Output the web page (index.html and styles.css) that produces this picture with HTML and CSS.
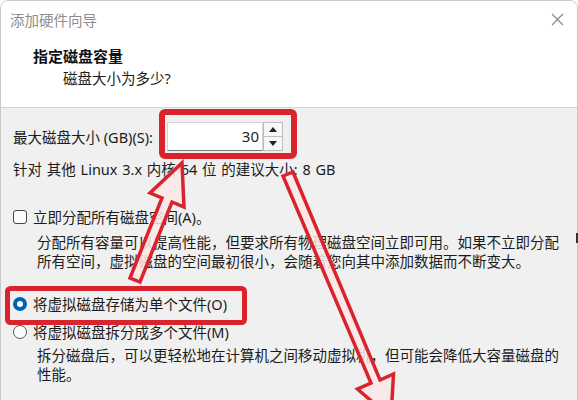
FILE: index.html
```html
<!DOCTYPE html>
<html lang="zh-CN">
<head>
<meta charset="utf-8">
<title>添加硬件向导</title>
<link rel="stylesheet" href="styles.css">
</head>
<body>
<div class="window">
  <div class="header">
    <div class="titlebar">
      <span class="title">添加硬件向导</span>
      <svg class="close" width="13" height="13" viewBox="0 0 13 13"><path d="M1 1L12 12M12 1L1 12" stroke="#8a8a8a" stroke-width="1.2" fill="none"/></svg>
    </div>
    <div class="heading">
      <div class="h1">指定磁盘容量</div>
      <div class="h2">磁盘大小为多少?</div>
    </div>
  </div>
  <div class="content">
    <div class="size-row">
      <span class="size-label">最大磁盘大小 (GB)(S):</span>
      <div class="spin">
        <div class="field">30</div>
        <div class="spin-btns">
          <div class="spin-btn"><svg width="8" height="5" viewBox="0 0 8 5"><path d="M0 5L4 0L8 5Z" fill="#222"/></svg></div>
          <div class="spin-btn"><svg width="8" height="5" viewBox="0 0 8 5"><path d="M0 0L8 0L4 5Z" fill="#222"/></svg></div>
        </div>
      </div>
    </div>
    <div class="hint">针对 其他 Linux 3.x 内核 64 位 的建议大小: 8 GB</div>
    <div class="option opt-check">
      <span class="checkbox"></span>
      <span>立即分配所有磁盘空间(A)。</span>
    </div>
    <div class="desc desc-a">
      <div>分配所有容量可以提高性能，但要求所有物理磁盘空间立即可用。如果不立即分配</div>
      <div>所有空间，虚拟磁盘的空间最初很小，会随着您向其中添加数据而不断变大。</div>
    </div>
    <div class="option opt-r1">
      <span class="radio radio-on"></span>
      <span>将虚拟磁盘存储为单个文件(O)</span>
    </div>
    <div class="option opt-r2">
      <span class="radio"></span>
      <span>将虚拟磁盘拆分成多个文件(M)</span>
    </div>
    <div class="desc desc-b">
      <div>拆分磁盘后，可以更轻松地在计算机之间移动虚拟机，但可能会降低大容量磁盘的</div>
      <div>性能。</div>
    </div>
  </div>
</div>
<span class="edge-mark"></span>
<svg class="annot" width="578" height="400" viewBox="0 0 578 400">
  <rect x="162" y="112" width="132" height="44" rx="3" fill="none" stroke="#d9232d" stroke-width="6"/>
  <rect x="7.5" y="288.5" width="237" height="34" rx="3" fill="none" stroke="#d9232d" stroke-width="5"/>
  <polygon points="182,163 184,207 172,202 140,282 130,278 162,198 150,193" fill="rgba(250,232,232,0.85)" stroke="#d9232d" stroke-width="3.5" stroke-linejoin="miter"/>
  <polygon points="283,176 293,172 380,380 393.5,374 391,418 357.5,389 371,383" fill="rgba(250,232,232,0.85)" stroke="#d9232d" stroke-width="3.5" stroke-linejoin="miter"/>
</svg>
</body>
</html>
```
FILE: styles.css
```css
html, body {
  margin: 0;
  padding: 0;
}
body {
  width: 578px;
  height: 400px;
  overflow: hidden;
  position: relative;
  background: #ffffff;
  font-family: "Noto Sans", "Noto Sans CJK SC", sans-serif;
  font-size: 14.5px;
  color: #1c1c1c;
}
.window {
  box-sizing: border-box;
  width: 578px;
  height: 420px;
  border: 1px solid #cacaca;
  border-radius: 8px 8px 0 0;
  background: #f0f0f0;
  overflow: hidden;
}
.header {
  background: #ffffff;
  height: 106px;
  border-bottom: 1px solid #d2d2d2;
}
.titlebar {
  height: 37px;
  display: flex;
  align-items: center;
  justify-content: space-between;
  padding: 0 13px 0 9px;
}
.title {
  color: #8e8e8e;
  font-size: 14.5px;
  line-height: 20px;
}
.close {
  display: block;
}
.heading {
  padding-left: 32px;
  padding-top: 8px;
}
.h1 {
  font-weight: bold;
  font-size: 15px;
  line-height: 20px;
  color: #111;
}
.h2 {
  margin-top: 2px;
  margin-left: 30px;
  line-height: 20px;
}
.content {
  padding: 14px 0 0 12px;
}
.size-row {
  display: flex;
  align-items: center;
  height: 29px;
}
.size-label {
  width: 154px;
  line-height: 20px;
  white-space: nowrap;
}
.spin {
  display: flex;
  height: 29px;
}
.field {
  box-sizing: border-box;
  width: 96px;
  height: 29px;
  background: #fff;
  border: 1px solid #d4d4d4;
  border-bottom: 1px solid #7a7a7a;
  text-align: right;
  padding-right: 3px;
  line-height: 26px;
  font-size: 15px;
}
.spin-btns {
  display: flex;
  flex-direction: column;
  width: 20px;
  height: 29px;
}
.spin-btn {
  box-sizing: border-box;
  flex: 1;
  display: flex;
  align-items: center;
  justify-content: center;
  background: #f7f7f7;
  border: 1px solid #bdbdbd;
}
.spin-btn + .spin-btn {
  border-top: none;
}
.hint {
  margin-top: 8px;
  line-height: 20px;
  word-spacing: 1px;
}
.option {
  display: flex;
  align-items: center;
  gap: 6px;
  line-height: 20px;
}
.opt-check {
  margin-top: 28px;
}
.checkbox {
  box-sizing: border-box;
  width: 14px;
  height: 14px;
  border: 1px solid #444;
  border-radius: 3px;
  background: #fbfbfb;
  flex: none;
}
.radio {
  box-sizing: border-box;
  width: 14px;
  height: 14px;
  border: 1px solid #555;
  border-radius: 50%;
  background: #fbfbfb;
  flex: none;
}
.radio-on {
  border: 4px solid #0063b1;
  background: #fff;
}
.desc {
  padding-left: 24px;
}
.desc-a {
  margin-top: 6px;
  line-height: 19px;
}
.opt-r1 {
  margin-top: 23px;
}
.opt-r2 {
  margin-top: 8px;
}
.desc-b {
  margin-top: 4px;
  line-height: 19px;
}
.edge-mark {
  position: absolute;
  right: 0;
  top: 233px;
  width: 2px;
  height: 10px;
  background: #333;
}
.annot {
  position: absolute;
  left: 0;
  top: 0;
  pointer-events: none;
}
```
